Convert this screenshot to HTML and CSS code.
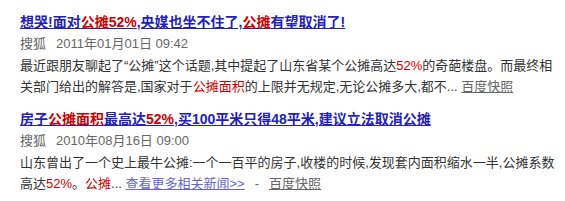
FILE: index.html
```html
<!DOCTYPE html>
<html lang="zh-CN">
<head>
<meta charset="UTF-8">
<title>公摊 - 百度新闻</title>
<link rel="stylesheet" href="styles.css">
</head>
<body>
    <div class="result-list">
        <div class="result">
            <h3 class="result-title"><a href="#">想哭!面对<em>公摊52%</em>,央媒也坐不住了,<em>公摊</em>有望取消了!</a></h3>
            <div class="result-author">搜狐<span class="result-time">2011年01月01日 09:42</span></div>
            <div class="result-summary">最近跟朋友聊起了“公摊”这个话题,其中提起了山东省某个公摊高达<em>52%</em>的奇葩楼盘。而最终相关部门给出的解答是,国家对于<em>公摊面积</em>的上限并无规定,无论公摊多大,都不... <a class="cache" href="#">百度快照</a></div>
        </div>
        <div class="result">
            <h3 class="result-title"><a href="#">房子<em>公摊面积</em>最高达<em>52%</em>,买100平米只得48平米,建议立法取消公摊</a></h3>
            <div class="result-author">搜狐<span class="result-time">2010年08月16日 09:00</span></div>
            <div class="result-summary">山东曾出了一个史上最牛公摊:一个一百平的房子,收楼的时候,发现套内面积缩水一半,公摊系数高达<em>52%</em>。<em>公摊</em>... <a class="more" href="#">查看更多相关新闻&gt;&gt;</a><span class="sep">-</span><a class="cache" href="#">百度快照</a></div>
        </div>
    </div>
</body>
</html>
```

FILE: styles.css
```css
body {
    margin: 0;
    background-color: #fff;
    font-family: "Liberation Sans", "Noto Sans CJK SC", sans-serif;
}
.result-list {
    width: 540px;
    padding: 11px 0 0 20px;
}
.result {
    margin-bottom: 11px;
}
.result em {
    font-style: normal;
    color: #c00;
}
.result-title {
    margin: 0;
    font-size: 14px;
    line-height: 22px;
    font-weight: bold;
}
.result-title a {
    color: #2222bb;
    text-decoration: underline;
}
.result-author {
    font-size: 13px;
    line-height: 22px;
    color: #666;
}
.result-time {
    margin-left: 10px;
}
.result-summary {
    font-size: 13px;
    line-height: 21px;
    color: #333;
}
.cache {
    color: #666;
    text-decoration: underline;
}
.more {
    color: #6666cc;
    text-decoration: underline;
}
.sep {
    margin: 0 10px;
    color: #666;
}
```
